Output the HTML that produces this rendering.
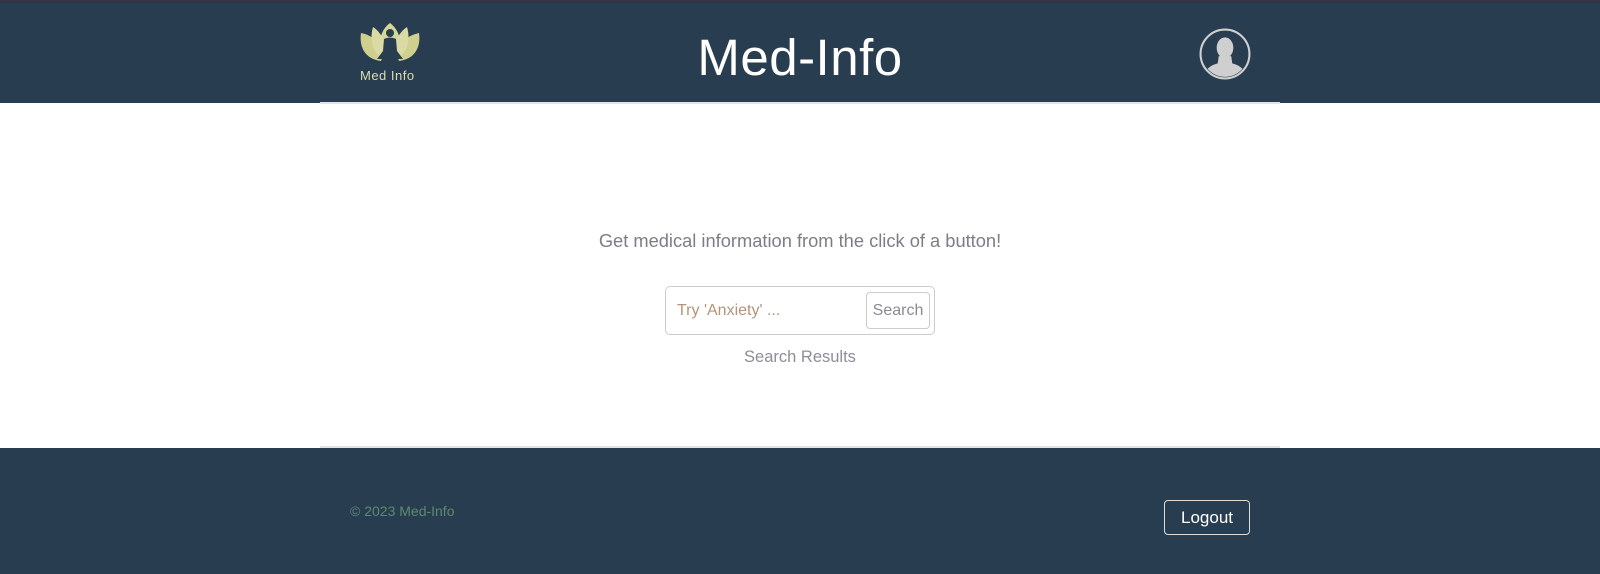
<!DOCTYPE html>
<html><head><meta charset="utf-8"><style>
html,body{margin:0;padding:0;width:1600px;height:574px;overflow:hidden;background:#fff;font-family:"Liberation Sans",sans-serif}
.top{height:3px;background:#343448}
header{position:absolute;top:3px;left:0;width:1600px;height:100px;background:#293d50}
.hline{position:absolute;top:102px;left:320px;width:960px;height:2px;background:#e4e4e4}
.title{position:absolute;left:0;width:1600px;top:25px;text-align:center;color:#fff;font-size:51px;font-weight:300;letter-spacing:0.5px}
.logo{position:absolute;left:357px;top:18px}
.logotxt{position:absolute;left:360px;top:65px;color:#dcdcb0;font-size:13px;letter-spacing:0.5px}
.avatar{position:absolute;left:1199px;top:25px}
.tag{position:absolute;top:230px;width:1600px;text-align:center;color:#7d7d88;font-size:18.3px}
.box{position:absolute;left:665px;top:286px;width:270px;height:49px;border:1px solid #ccc;border-radius:5px;box-sizing:border-box}
.ph{position:absolute;left:11px;top:15px;color:#b4947a;font-size:16px}
.btn{position:absolute;left:200px;top:5px;width:64px;height:37px;border:1px solid #ccc;border-radius:4px;box-sizing:border-box;color:#8a8a95;font-size:16px;text-align:center;line-height:35px}
.res{position:absolute;top:348px;width:1600px;text-align:center;color:#8d8d98;font-size:16.5px}
footer{position:absolute;top:448px;left:0;width:1600px;height:126px;background:#293d50}
.fline{position:absolute;top:446px;left:320px;width:960px;height:2px;background:#e4e4e4}
.copy{position:absolute;left:350px;top:55px;color:#5d8a6e;font-size:14px}
.logout{position:absolute;left:1164px;top:52px;width:86px;height:35px;border:1px solid #ddd;border-radius:4px;box-sizing:border-box;color:#fff;font-size:17px;text-align:center;line-height:33px}
</style></head><body>
<div class="top"></div>
<header>
<svg class="logo" width="66" height="46" viewBox="0 0 66 46">
<path d="M33 2 C22 10 20 26 26 38 L40 38 C46 26 44 10 33 2Z" fill="#d6d69a"/>
<path d="M4 12 C2 26 8 38 24 40 L28 30 C22 20 14 14 4 12Z" fill="#d0d08e"/>
<path d="M62 12 C64 26 58 38 42 40 L38 30 C44 20 52 14 62 12Z" fill="#d0d08e"/>
<path d="M16 6 C12 20 16 34 28 38 L30 26 C26 16 22 10 16 6Z" fill="#dadaa4"/>
<path d="M50 6 C54 20 50 34 38 38 L36 26 C40 16 44 10 50 6Z" fill="#dadaa4"/>
<circle cx="33" cy="12" r="4" fill="#293d50"/>
<path d="M27 18 Q33 15 39 18 L40 30 L46 38 L20 38 L26 30Z" fill="#293d50"/>
</svg>
<div class="logotxt">Med Info</div>
<div class="title">Med-Info</div>
<svg class="avatar" width="52" height="52" viewBox="0 0 50 50">
<circle cx="25" cy="25" r="23.5" fill="none" stroke="#cfcfcf" stroke-width="2"/>
<clipPath id="c"><circle cx="25" cy="25" r="22"/></clipPath>
<g clip-path="url(#c)" fill="#cfcfcf">
<ellipse cx="25" cy="19" rx="8" ry="10"/>
<path d="M19 27 L31 27 L32 34 Q44 37 46 48 L4 48 Q6 37 18 34Z"/>
</g>
</svg>
</header>
<div class="hline"></div>
<div class="tag">Get medical information from the click of a button!</div>
<div class="box"><span class="ph">Try 'Anxiety' ...</span><div class="btn">Search</div></div>
<div class="res">Search Results</div>
<div class="fline"></div>
<footer>
<div class="copy">© 2023 Med-Info</div>
<div class="logout">Logout</div>
</footer>
</body></html>
